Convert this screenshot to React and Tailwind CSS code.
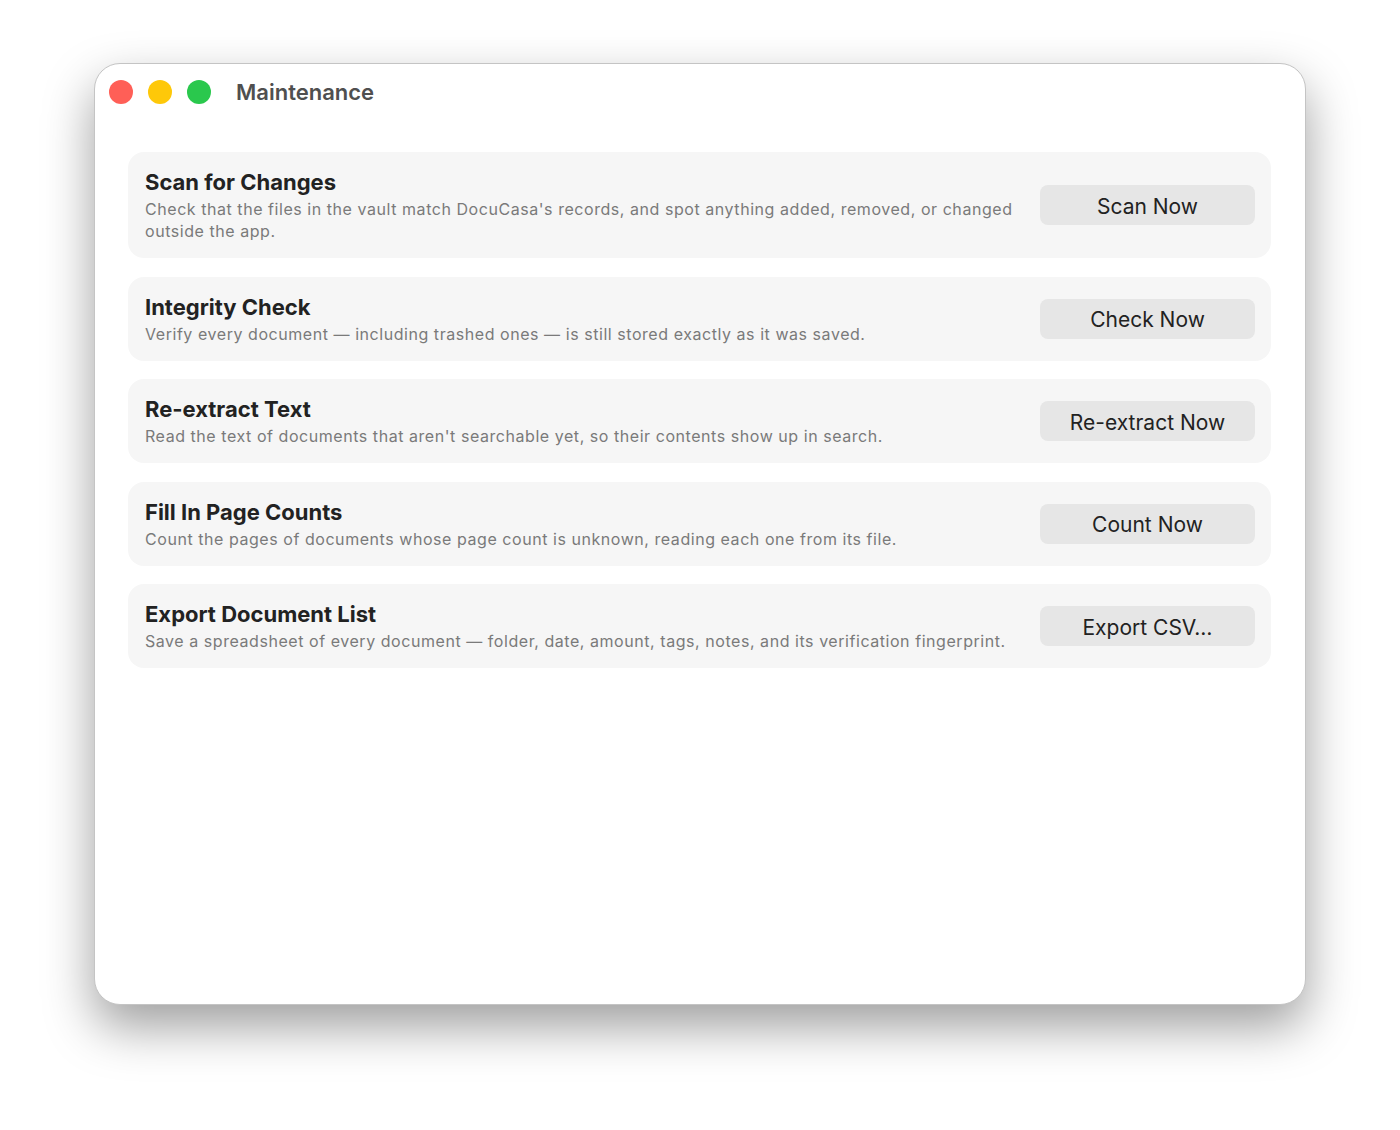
const tasks = [
  {
    title: 'Scan for Changes',
    desc: "Check that the files in the vault match DocuCasa's records, and spot anything added, removed, or changed outside the app.",
    action: 'Scan Now',
  },
  {
    title: 'Integrity Check',
    desc: 'Verify every document — including trashed ones — is still stored exactly as it was saved.',
    action: 'Check Now',
  },
  {
    title: 'Re-extract Text',
    desc: "Read the text of documents that aren't searchable yet, so their contents show up in search.",
    action: 'Re-extract Now',
  },
  {
    title: 'Fill In Page Counts',
    desc: 'Count the pages of documents whose page count is unknown, reading each one from its file.',
    action: 'Count Now',
  },
  {
    title: 'Export Document List',
    desc: 'Save a spreadsheet of every document — folder, date, amount, tags, notes, and its verification fingerprint.',
    action: 'Export CSV…',
  },
]

function TaskCard({ title, desc, action }) {
  return (
    <div className="flex items-center gap-6 rounded-2xl bg-[#f6f6f6] py-4 pl-[17px] pr-4">
      <div className="min-w-0 flex-1">
        <div className="text-[22px] leading-[28px] font-bold text-[#222222]">{title}</div>
        <div className="mt-[2px] text-[16px] leading-[22px] tracking-[0.55px] text-[#7a7a7a]">{desc}</div>
      </div>
      <button className="h-10 w-[215px] shrink-0 rounded-lg bg-[#e6e6e6] pt-[3px] text-[21px] text-[#222222]">
        {action}
      </button>
    </div>
  )
}

export default function App() {
  return (
    <div
      className="min-h-screen w-full bg-white pt-[63px]"
      style={{ fontFamily: 'Inter, "Noto Sans", "Liberation Sans", sans-serif' }}
    >
      <div className="mx-auto flex h-[942px] w-[1212px] flex-col rounded-[26px] border border-[#c4c4c4] bg-white shadow-[0_22px_50px_rgba(0,0,0,0.38)]">
        {/* Title bar */}
        <div className="flex h-[56px] items-center pl-[14px]">
          <div className="flex items-center gap-[15px]">
            <span className="h-6 w-6 rounded-full bg-[#ff5f57]" />
            <span className="h-6 w-6 rounded-full bg-[#fec809]" />
            <span className="h-6 w-6 rounded-full bg-[#2ac84d]" />
          </div>
          <span className="ml-[25px] text-[22px] font-semibold text-[#4f4f4f]">Maintenance</span>
        </div>

        {/* Tasks */}
        <div className="flex flex-col gap-[18.5px] pl-[33px] pr-[34px] pt-[32px]">
          {tasks.map((t) => (
            <TaskCard key={t.title} {...t} />
          ))}
        </div>
      </div>
    </div>
  )
}
